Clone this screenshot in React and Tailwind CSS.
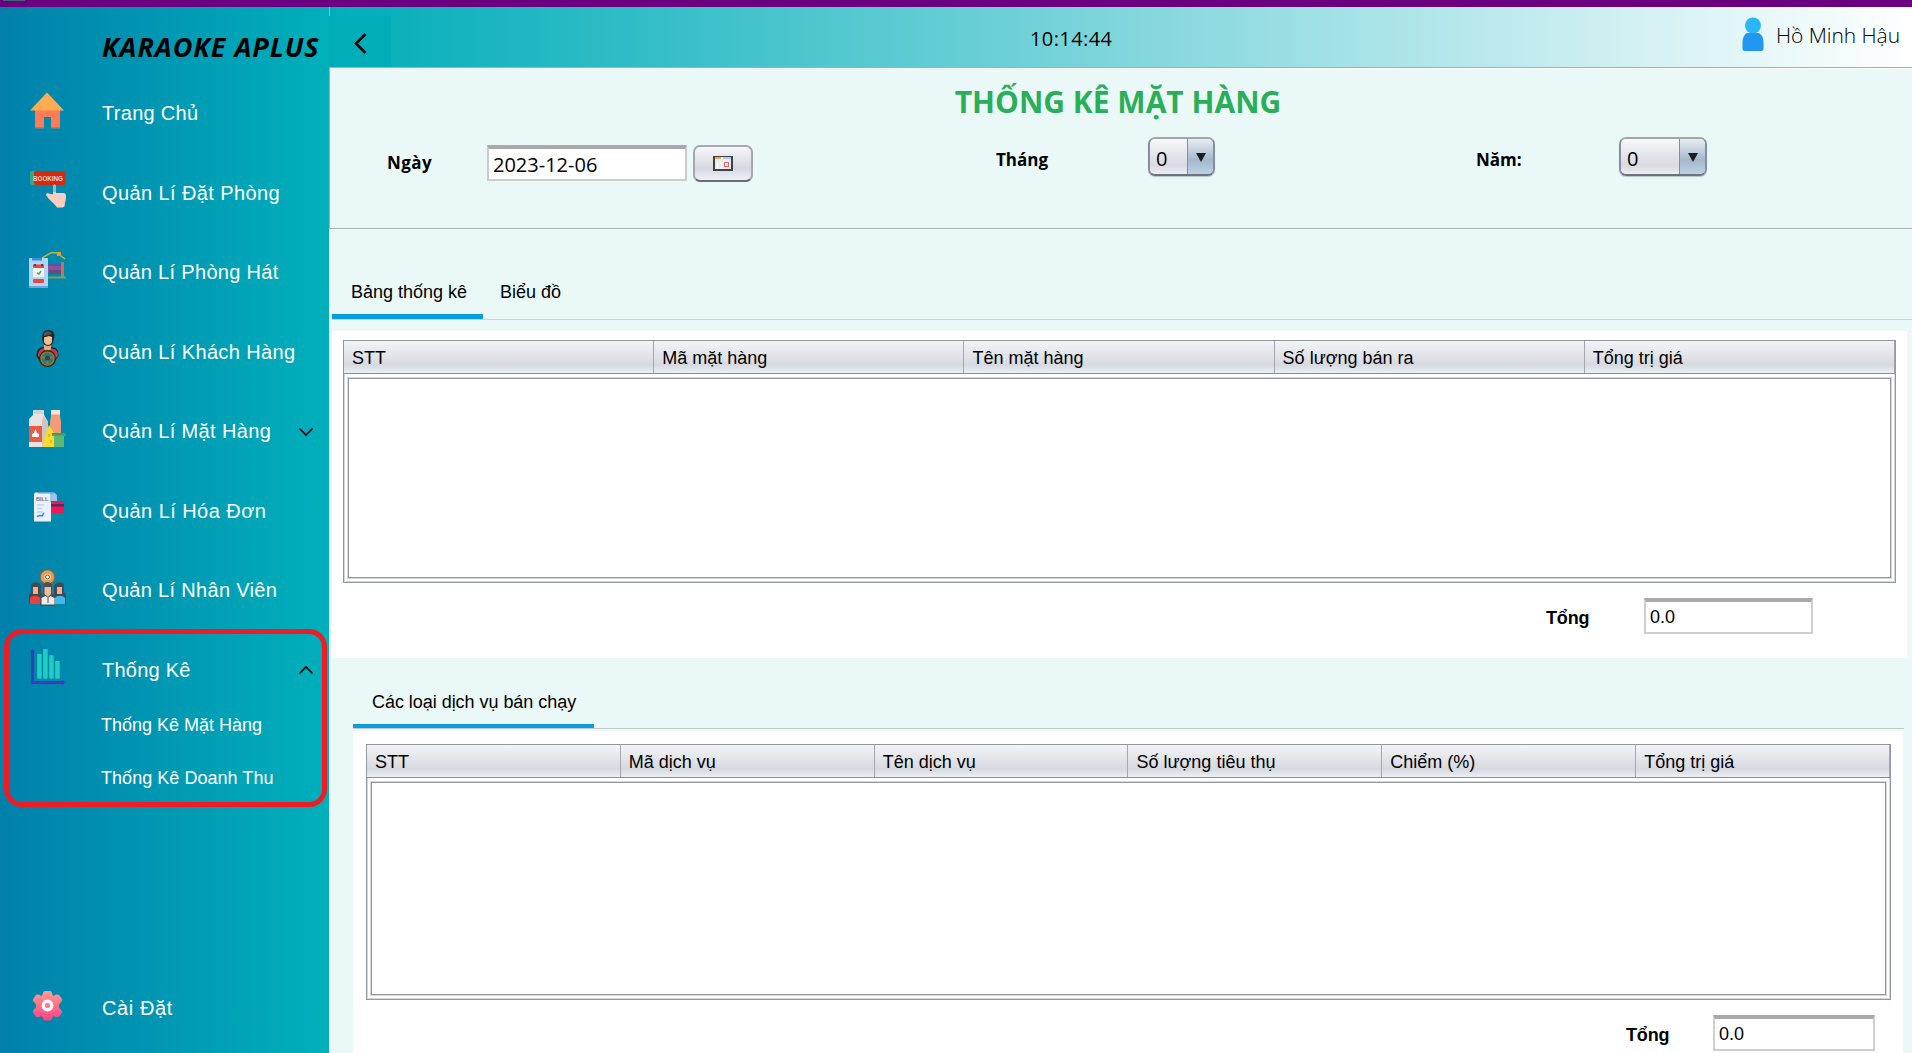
import React from "react";

/* ---------- Sidebar icons, drawn on a 37x37 grid ---------- */

const HomeIcon = () => (
  <>
    <path d="M6 17h25v18.5H6z" fill="#ff7b57" />
    <path d="M6 35h9v1.500H6zM22 35h9v1.500h-9z" fill="#a97f86" />
    <path d="M18 .5 35 18.5H1z" fill="#ffab50" />
    <path d="M15 25h7v12h-7z" fill="#0089ab" />
  </>
);

const BookingIcon = () => (
  <>
    <rect x="1" y="0" width="16" height="14" rx="2" fill="#2fa98c" />
    <rect x="5" y="0" width="31.500" height="14" rx="2" fill="#d42a0e" />
    <text x="4" y="10.300" fontSize="8" fontWeight="bold" textLength="30" lengthAdjust="spacingAndGlyphs" fill="#f3d3cf" className="font-['Liberation_Sans']">BOOKING</text>
    <path d="M24 15c0-2 3-2 3 0v7l8 0c1.500.5 2 1.500 2 3 0 4-1 6-1.500 10.500l-2 1H28c-2-3.500-5-5-8-8.500l-3-4c0-1.500 1-2 2.500-1.500l4.500 1z" fill="#ffcdbf" />
    <path d="M24 14h3v7h-3z" fill="#9fb8be" />
  </>
);

const RoomIcon = () => (
  <>
    <path d="m13 7 9.500-5.500L28 2l8 6" fill="none" stroke="#b9b53c" strokeWidth="1.500" />
    <rect x="28" y="1" width="4" height="4" fill="#f19a2b" />
    <rect x="18" y="13" width="14" height="2" fill="#4a5aa8" />
    <rect x="17" y="15" width="15" height="6" fill="#8e4fa5" />
    <rect x="20" y="19" width="12" height="4" fill="#6b4c78" />
    <rect x="32" y="11" width="3" height="15" fill="#b87c54" />
    <path d="M17 25.500h20v2H17z" fill="#7aa05b" />
    <rect x="0" y="7" width="19" height="30" rx="1" fill="#b5d3f4" />
    <path d="M3 7h10v2.500H3z" fill="#3b8fd9" />
    <rect x="4" y="14" width="11" height="12" fill="#f3f3f1" />
    <rect x="4" y="13.500" width="11" height="3.500" fill="#e5493b" />
    <path d="M5 13h2v2H5zM12 13h2v2h-2z" fill="#3d4664" />
    <path d="m8 22 2 1 2-3" fill="none" stroke="#4ca566" strokeWidth="1.500" />
    <rect x="4" y="28" width="11" height="4" rx="1" fill="#e5493b" />
    <path d="M0 35h19v2H0z" fill="#6da5df" />
  </>
);

const CustomerIcon = () => (
  <>
    <path d="M7.500 26c0-6 2-9 8-9h6c6 0 8 3 8 9l-3 4-3 5H14l-4-5z" fill="#1d2227" />
    <path d="M9 26c0-5 2-7.500 7-7.500h6c5 0 7 2.500 7 7.500l-3 3H12z" fill="#c33b46" />
    <path d="M15 15h7v4.500l-3.500 2-3.500-2z" fill="#e9ae7b" />
    <path d="M13 8c0-5 2-8 6-8s6.500 2 6.500 6L24 13c-1 2-3 3-5 3s-4-1-5-3z" fill="#23272c" />
    <path d="M15 7.500 20 6l3 1v5c-1 2-2 3-4 3s-3-1-4-3z" fill="#f4bf8e" />
    <path d="M15 3c2-2 6-2 8 1l-8 2z" fill="#50545b" />
    <circle cx="18.500" cy="28.500" r="7" fill="none" stroke="#1d2227" strokeWidth="3" />
    <circle cx="18.500" cy="28.500" r="6.500" fill="#14818f" stroke="#a8701e" strokeWidth="1.700" />
    <path d="M12 27.500h13M18.500 29v6" stroke="#a8701e" strokeWidth="2" />
    <circle cx="18.500" cy="28" r="2.500" fill="#22485a" />
  </>
);

const GoodsIcon = () => (
  <>
    <path d="M4 0h11v5l4 7v25H0V9l4-4z" fill="#e9e4e2" />
    <path d="M15 5l4 7v25h-6V10z" fill="#cfc6c4" />
    <path d="M4 0h11v4H4z" fill="#d8d1cf" />
    <rect x="0" y="16" width="13" height="16" fill="#ea5a47" />
    <path d="M6.500 19 8 23l2 1v3H3v-3l2-1z" fill="#fff" />
    <path d="M22 0h9v6l1 6v13H21V12l1-6z" fill="#f39b77" />
    <path d="M22 0h9v4.500h-9z" fill="#fbe3d0" />
    <path d="m20 15 5 8v14H13.500l2-10z" fill="#f5dc2e" />
    <path d="M19 24h2v3h-2zM21 30h2v3h-2z" fill="#e6b91f" />
    <path d="M23 23h14v3h-2v11H25V26h-2z" fill="#5db873" />
    <path d="M23 23h14v2.500H23z" fill="#3f9f58" />
  </>
);

const BillIcon = () => (
  <>
    <path d="M6 3.500h19l2 3v16l-5 10H5V5z" fill="#e9f2fc" />
    <path d="M21 4h4c2 0 3 2 3 4v5h-7z" fill="#9cc3ee" />
    <path d="M9 3h16v1.500H9z" fill="#5da5d6" />
    <text x="7" y="12" fontSize="5.500" fontWeight="bold" textLength="12.500" lengthAdjust="spacingAndGlyphs" fill="#6b7390" className="font-['Liberation_Sans']">BILL</text>
    <path d="M8 16h7M8 19.500h5M8 23h6" stroke="#bcd6f1" strokeWidth="1.600" />
    <path d="m8 27.500 3-1 2 .500 2-3" fill="none" stroke="#3b86d8" strokeWidth="1.500" />
    <rect x="22" y="12" width="13" height="12" fill="#f2174f" />
    <path d="M22 15h13v2.500H22z" fill="#54286b" />
    <path d="M22 24h6v9h-6z" fill="#008ead" />
  </>
);

const StaffIcon = () => (
  <>
    <circle cx="18.500" cy="8" r="6.500" fill="none" stroke="#7a6455" strokeWidth="4" strokeDasharray="3.200 1.900" />
    <circle cx="18.500" cy="8" r="5" fill="#cfe3e6" stroke="#f3993f" strokeWidth="3.600" />
    <circle cx="18.500" cy="8" r="2" fill="#e8f1f3" stroke="#5d6166" strokeWidth="1" />
    <path d="M0 35V26l2-3V17c0-5 9-5 10 0v7l2 4v7z" fill="#424a50" />
    <path d="M37 35V26l-2-3V17c0-5-9-5-10 0v7l-2 4v7z" fill="#424a50" />
    <path d="M4 18h5v7H4z" fill="#efb18a" />
    <path d="M28 18h5v7h-5z" fill="#efb18a" />
    <path d="M1 29c2-3 8-3 10 0v6H1z" fill="#e8403f" />
    <path d="M26 29c2-3 8-3 10 0v6H26z" fill="#42b8ea" />
    <path d="M11 37v-9l3-3V16c1-4 8-4 9 0v9l3 3v9z" fill="#4b5157" />
    <path d="M15.500 18h6.500v7l-3 3-3.500-3z" fill="#f4bb95" />
    <path d="M12.500 35.500V29l4-2 2.500 2 2.500-2 4 2v6.500z" fill="#ececec" />
    <path d="M18 29h2v5h-2z" fill="#9aa0a5" />
  </>
);

const ChartIcon = () => (
  <>
    <path d="M8 6h5v24.500H8zM14 1h5v29.500h-5zM20 7.500h5v23h-5zM26 13h5v17.500h-5z" fill="#1fb5b8" />
    <path d="M8.500 6h3.500v24.500H8.500zM14.500 1H18v29.500h-3.500zM20.500 7.500H24v23h-3.500zM26.500 13H30v17.500h-3.500z" fill="#21cdc2" />
    <path d="M3.500 2v32.500h31" fill="none" stroke="#3a3cbc" strokeWidth="3" />
    <path d="M1 4.500h5L3.500 1zM33 32v5l3-2.500z" fill="#3a3cbc" />
  </>
);

const GearIcon = () => (
  <>
    <defs>
      <linearGradient id="gear" x1="0" y1="0" x2="0" y2="1">
        <stop offset="0" stopColor="#ff9f8c" />
        <stop offset="1" stopColor="#ff3f86" />
      </linearGradient>
    </defs>
    <path d="M14 6q0-2 2-2h5q2 0 2 2l1 3 3.500-1.500q2-.5 3 1l2.500 3.500q.500 2-1 3L30 17.500v3l2 2.500q1.500 1 1 2.500l-2.500 3.500q-1 1.500-3 1L24 29 23 31.500q0 2-2 2h-5q-2 0-2-2L13 29l-3.500 1q-2 .500-3-1L4 25.500q-.500-2 1-3l2-2v-3l-2-2.500q-1.500-1-1-2.500L6.500 8.500q1-1.500 3-1L13 9z" fill="url(#gear)" />
    <circle cx="18.500" cy="18.500" r="4.300" fill="#ff7e8b" stroke="#fff" strokeWidth="3.200" />
  </>
);

const MENU = [
  ["Trang Chủ", HomeIcon, "tracking-[0.3px]"],
  ["Quản Lí Đặt Phòng", BookingIcon, "tracking-[0.4px]"],
  ["Quản Lí Phòng Hát", RoomIcon, "tracking-[0.32px]"],
  ["Quản Lí Khách Hàng", CustomerIcon, "tracking-[0.37px]"],
  ["Quản Lí Mặt Hàng", GoodsIcon, "tracking-[0.36px]", "down"],
  ["Quản Lí Hóa Đơn", BillIcon, "tracking-[0.44px]"],
  ["Quản Lí Nhân Viên", StaffIcon, "tracking-[0.32px]"],
  ["Thống Kê", ChartIcon, "tracking-[0.25px]", "up"],
];

function MenuItem({ label, Icon, tracking, arrow }) {
  return (
    <div className="flex h-[79.5px] shrink-0 items-center pl-[29px] pr-[16px]">
      <svg width="37" height="37" viewBox="0 0 37 37" className="shrink-0 overflow-visible"><Icon /></svg>
      <span className={"ml-9 flex-1 whitespace-nowrap pt-[6px] text-[20px] leading-6 text-white " + tracking}>{label}</span>
      {arrow && (
        <svg width="14" height="8" viewBox="0 0 14 8" className="mt-[7px] shrink-0 overflow-visible">
          <path d={arrow === "down" ? "M.5.5 7 7 13.500.5" : "M.5 7.500 7 1l6.500 6.500"} fill="none" stroke="#000" strokeWidth="1.600" />
        </svg>
      )}
    </div>
  );
}

function Sidebar() {
  return (
    <aside className="flex w-[329px] shrink-0 flex-col bg-linear-to-r/srgb from-[#0080ab] to-[#00b0bb]">
      <div className="h-[63.5px] shrink-0 whitespace-nowrap pl-[102px] pt-[22px] font-['Open_Sans'] text-[27px] font-bold italic leading-9 tracking-[0.95px] text-black">
        KARAOKE APLUS
      </div>
      {MENU.map(([label, Icon, tracking, arrow]) => (
        <MenuItem key={label} label={label} Icon={Icon} tracking={tracking} arrow={arrow} />
      ))}
      <div className="-mt-[7px] flex flex-col pl-[101px] text-[18px] text-white">
        <span className="h-[53px] leading-[51px]">Thống Kê Mặt Hàng</span>
        <span className="h-[53px] leading-[51px] tracking-[0.04px]">Thống Kê Doanh Thu</span>
      </div>
      <div className="mt-auto pb-2">
        <MenuItem label="Cài Đặt" Icon={GearIcon} tracking="tracking-[0.6px]" />
      </div>
    </aside>
  );
}

function Header() {
  return (
    <header className="flex h-[60px] shrink-0 bg-linear-to-r/srgb from-[#00adb9] to-white">
      <div className="flex w-[62px] flex-col">
        <div className="h-[9px] w-px bg-[#6fc5cc]" />
        <div className="flex-1 bg-[#00adb9] pl-6 pt-[17px]">
          <svg width="14" height="21" viewBox="0 0 14 21">
            <path d="M12.500 1 3 10.500l9.500 9.500" fill="none" stroke="#000" strokeWidth="2.600" />
          </svg>
        </div>
      </div>
      <div className="ml-[639px] pt-[18px] font-['Open_Sans'] text-[20px] leading-[28px] tracking-[0.4px] text-black">10:14:44</div>
      <div className="ml-auto flex pr-[12px]">
        <svg width="22" height="35" viewBox="0 0 22 35" className="mt-[10px]">
          <circle cx="11" cy="8.500" r="8" fill="#29b6ff" />
          <path d="M4.500 16h12.500c3 2 4.500 5 4.500 9v6.500q0 2.500-2.500 2.500H3Q.5 34 .5 31.500V25c0-4 1.500-7 4-9z" fill="#2196f3" />
        </svg>
        <span className="ml-3 pt-[14px] font-['Open_Sans'] text-[21px] font-[350] leading-[28px] tracking-[-0.05px] text-black">Hồ Minh Hậu</span>
      </div>
    </header>
  );
}

function Combo({ className }) {
  return (
    <div className={"flex h-[39px] overflow-hidden rounded-[7px] border-2 border-t-[#a3a5ab] border-b-[#6c737e] shadow-[0_1px_1px_#b9c3c6] " + className}>
      <div className="flex-1 bg-linear-to-b/srgb from-[#f8f8fa] via-[#d8dae1] via-75% to-[#eceef3] pl-[6px] font-['Open_Sans'] text-[20px] leading-[40px] text-black">0</div>
      <div className="flex w-[26px] justify-center border-l border-[#7e91a4] bg-linear-to-b/srgb from-[#e8eef3] via-[#a4b7cc] via-60% to-[#bdd2e6] pt-[14px]">
        <svg width="10" height="9" viewBox="0 0 10 9"><path d="M0 0h10L5 9z" fill="#1c1c1c" /></svg>
      </div>
    </div>
  );
}

function FilterPanel() {
  return (
    <section className="flex h-[162px] shrink-0 flex-col border border-r-0 border-[#a2b0b0] shadow-[inset_1px_1px_0_#ffffff,0_1px_0_#ffffff]">
      <h1 className="h-[55px] pr-[6px] pt-[12px] text-center font-['Open_Sans'] text-[30px] font-bold leading-[44px] text-[#2aae59]">THỐNG KÊ MẶT HÀNG</h1>
      <div className="flex items-start font-['Open_Sans'] text-black">
        <span className="ml-[57px] mt-[28px] w-[100px] text-[17px] font-bold leading-6 tracking-[0.4px]">Ngày</span>
        <div className="mt-[22px] h-9 w-[200px] border-2 border-t-4 border-[#c9cbcd] border-t-[#a9a9ab] bg-white pl-1 text-[20px] leading-[31px]">2023-12-06</div>
        <div className="ml-[6px] mt-[22px] flex h-[37px] w-[60px] items-center justify-center rounded-[7px] border-2 border-[#a5a8af] border-b-[#666c78] bg-linear-to-b/srgb from-[#f5f6f8] via-[#d5d8e0] via-65% to-[#eff1fa]">
          <svg width="21" height="16" viewBox="0 0 21 16" shapeRendering="crispEdges">
            <path d="M0 0h20v15H0z" fill="#3f4245" />
            <path d="M2 1h16v12H2z" fill="#ececee" />
            <path d="M2 1h6v2H2z" fill="#f0ab45" />
            <path d="M10 1h8v2h-8z" fill="#a9cbef" />
            <path d="M4 6h1v7H4zM8 6h1v7H8z" fill="#fff" />
            <rect x="11.500" y="6.500" width="4" height="4" fill="none" stroke="#e8676b" strokeWidth="1" />
          </svg>
        </div>
        <span className="ml-[243px] mt-[25px] w-[152px] text-[17px] font-bold leading-6">Tháng</span>
        <Combo className="mt-[14px] w-[67px] border-x-[#84909e]" />
        <span className="ml-[261px] mt-[25px] w-[143px] text-[17px] font-bold leading-6">Năm:</span>
        <Combo className="mt-[14px] w-[88px] border-x-[#84909e]" />
      </div>
    </section>
  );
}

function Table({ columns, className, bodyClass }) {
  return (
    <div className={"flex flex-col border border-[#9297a1] text-[18px] text-black shadow-[inset_0_0_0_1px_#d5d7dc] " + className}>
      <div className="flex h-[33px] shrink-0 border-b border-[#8a8e98] bg-linear-to-b/srgb from-[#f3f4f6] via-[#d7d9e0] via-75% to-[#eceff6]">
        {columns.map((c) => (
          <div key={c} className="flex-1 basis-0 whitespace-nowrap border-r border-[#a3a7b0] pl-2 pt-[1px] leading-[32px]">{c}</div>
        ))}
      </div>
      <div className={"flex-1 border border-[#9297a1] bg-white outline outline-[#d5d7dc] " + bodyClass} />
    </div>
  );
}

function Total({ className, labelClass, fieldClass }) {
  return (
    <div className={"flex text-[18px] text-black " + className}>
      <span className={"shrink-0 font-bold leading-[40px] tracking-[-0.15px] " + labelClass}>Tổng</span>
      <div className={"h-9 border-2 border-t-4 border-[#cdcfd1] border-t-[#a9a9ab] bg-white pl-1 leading-[31px] " + fieldClass}>0.0</div>
    </div>
  );
}

export default function App() {
  return (
    <div className="relative flex h-[1053px] w-[1912px] flex-col overflow-hidden bg-[#eaf9f8] font-['Liberation_Sans',sans-serif]">
      <div className="h-[7px] shrink-0 bg-[#6a0080]">
        <div className="ml-[3px] h-px w-[22px] bg-[#3f6577]" />
      </div>
      <div className="flex min-h-0 flex-1">
        <Sidebar />
        <main className="flex min-w-0 flex-1 flex-col">
          <Header />
          <FilterPanel />
          <div className="ml-[3px] mt-[39px] flex h-[52px] shrink-0 border-b border-[#cbd2d4] text-[18px] leading-[48px] text-black">
            <div className="w-[151px] border-b-[5px] border-[#089edc] pl-[19px]">Bảng thống kê</div>
            <div className="pl-[17px]">Biểu đồ</div>
          </div>
          <section className="ml-[3px] mr-[5px] mt-[11px] flex h-[327px] shrink-0 flex-col bg-white pl-[11px] pt-[9px]">
            <Table
              className="h-[243px] w-[1553px]"
              bodyClass="m-1"
              columns={["STT", "Mã mặt hàng", "Tên mặt hàng", "Số lượng bán ra", "Tổng trị giá"]}
            />
            <Total className="ml-[1203px] mt-[15px]" labelClass="w-[98px]" fieldClass="w-[169px]" />
          </section>
          <div className="ml-6 mr-2 mt-[23px] flex h-12 shrink-0 border-b border-[#c3c9cb] text-[18px] leading-[43px] text-black">
            <div className="w-[241px] border-b-4 border-[#089edc] pl-[19px] tracking-[-0.04px]">Các loại dịch vụ bán chạy</div>
          </div>
          <section className="ml-6 mr-[9px] mt-[2px] flex flex-1 flex-col bg-white pl-[13px] pt-[13px]">
            <Table
              className="h-[256px] w-[1525px]"
              bodyClass="m-1"
              columns={["STT", "Mã dịch vụ", "Tên dịch vụ", "Số lượng tiêu thụ", "Chiểm (%)", "Tổng trị giá"]}
            />
            <Total className="ml-[1260px] mt-[15px]" labelClass="w-[87px]" fieldClass="w-[162px]" />
          </section>
        </main>
      </div>
      {/* Highlight frame around the statistics menu */}
      <div className="absolute left-[4px] top-[629px] h-[178px] w-[323px] rounded-[18px] border-[5px] border-[#ee1c24]" />
    </div>
  );
}
